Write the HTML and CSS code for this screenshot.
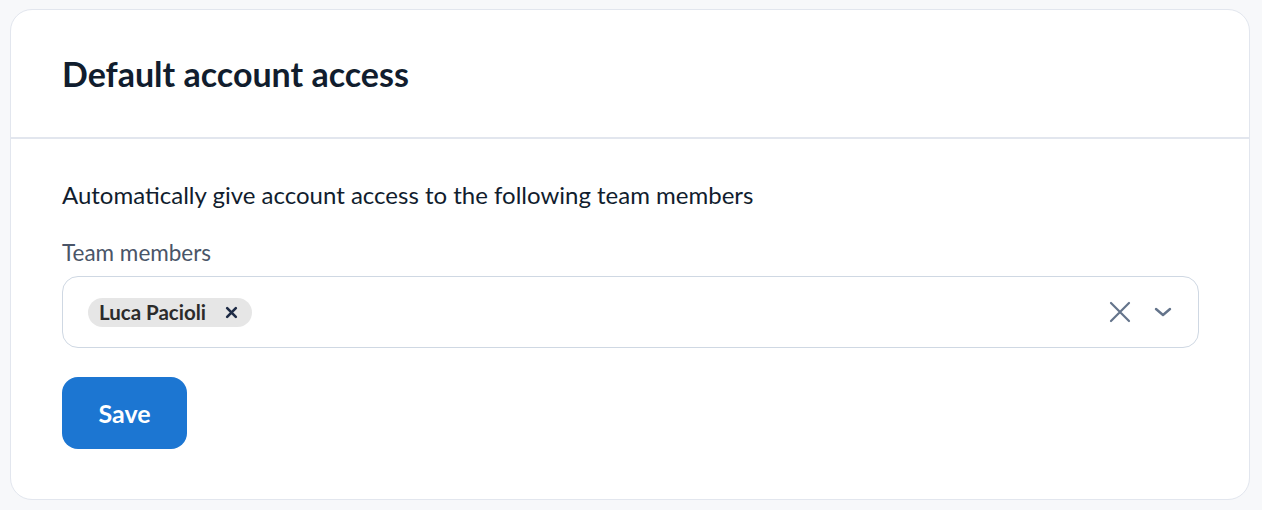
FILE: index.html
```html
<!DOCTYPE html>
<html lang="en">

<head>
    <meta charset="UTF-8">
    <meta name="viewport" content="width=device-width, initial-scale=1.0">
    <title>Default account access</title>
    <link rel="stylesheet" href="styles.css">
</head>

<body>
    <div class="card">
        <div class="card-header">
            <h1>Default account access</h1>
        </div>
        <div class="card-body">
            <p class="intro">Automatically give account access to the following team members</p>
            <label class="label">Team members</label>
            <div class="select">
                <div class="chips">
                    <span class="chip">Luca Pacioli
                        <svg class="chip-x" width="13" height="13" viewBox="0 0 12 12">
                            <path d="M2 2 L10 10 M10 2 L2 10" stroke="#1e2b45" stroke-width="2.4" stroke-linecap="round" />
                        </svg>
                    </span>
                </div>
                <div class="controls">
                    <svg width="22" height="22" viewBox="0 0 22 22">
                        <path d="M2 2 L20 20 M20 2 L2 20" stroke="#64748b" stroke-width="2.2" stroke-linecap="round" />
                    </svg>
                    <svg class="chevron" width="18" height="10" viewBox="0 0 18 10">
                        <path d="M2 2 L9 8 L16 2" fill="none" stroke="#64748b" stroke-width="2.4" stroke-linecap="round" stroke-linejoin="round" />
                    </svg>
                </div>
            </div>
            <button class="save">Save</button>
        </div>
    </div>
</body>

</html>
```

FILE: styles.css
```css
body {
    margin: 0;
    padding: 9px 12px 10px 10px;
    background-color: #f7f8fa;
    font-family: 'Lato', 'Open Sans', sans-serif;
    color: #111d2e;
}

.card {
    background-color: #fff;
    border: 1px solid #e2e6ee;
    border-radius: 22px;
}

.card-header {
    height: 127px;
    border-bottom: 2px solid #e2e6ee;
    display: flex;
    align-items: center;
    padding-left: 51px;
}

h1 {
    margin: 0;
    font-size: 34px;
    font-weight: 700;
    color: #111d2e;
}

.card-body {
    padding: 40px 50px 50px 51px;
}

.intro {
    margin: 0;
    font-size: 24px;
    line-height: 32px;
}

.label {
    display: block;
    margin-top: 27px;
    font-size: 22.5px;
    line-height: 30px;
    color: #4a5568;
}

.select {
    margin-top: 8px;
    height: 70px;
    border: 1px solid #cfd8e3;
    border-radius: 16px;
    display: flex;
    align-items: center;
    justify-content: space-between;
    padding: 0 26px 0 25px;
}

.chip {
    display: inline-flex;
    align-items: center;
    gap: 19px;
    height: 29px;
    padding: 0 14px 0 11px;
    border-radius: 15px;
    background-color: #e6e6e6;
    font-size: 20.5px;
    font-weight: 700;
    color: #2b2b2b;
}

.controls {
    display: flex;
    align-items: center;
    gap: 23px;
}

.save {
    margin-top: 29px;
    width: 125px;
    height: 72px;
    border: none;
    border-radius: 16px;
    background-color: #1c76d2;
    color: #fff;
    font-family: 'Lato', 'Open Sans', sans-serif;
    font-size: 25px;
    font-weight: 700;
}
```
